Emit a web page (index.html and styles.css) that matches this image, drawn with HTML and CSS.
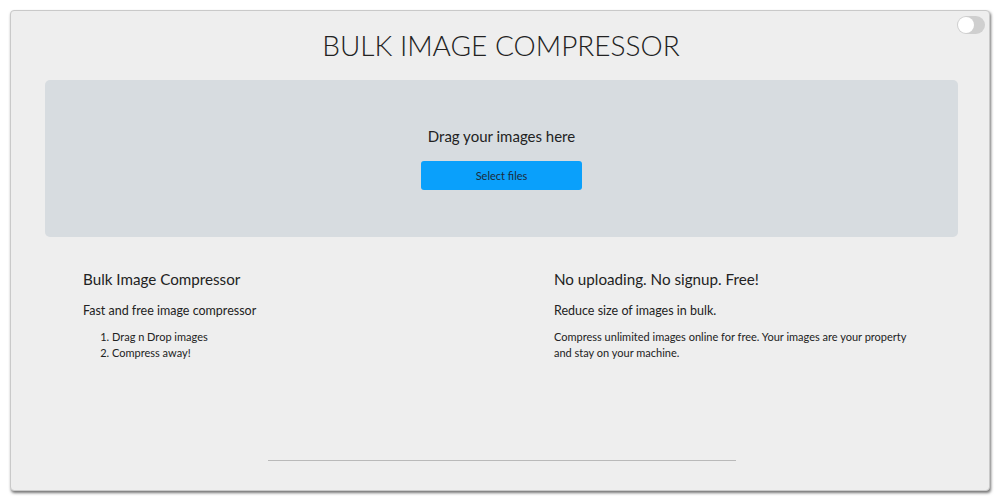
FILE: index.html
```html
<!DOCTYPE html>
<html>
<head>
<meta charset="utf-8">
<link rel="stylesheet" href="styles.css">
</head>
<body>
<div class="frame">
  <div class="toggle"><span class="knob"></span></div>
  <h1 class="title">BULK IMAGE COMPRESSOR</h1>
  <div class="dropzone">
    <p class="drop-text">Drag your images here</p>
    <button class="select-btn">Select files</button>
  </div>
  <div class="info">
    <div class="col col-left">
      <h2 class="col-title">Bulk Image Compressor</h2>
      <p class="col-sub">Fast and free image compressor</p>
      <ol class="steps">
        <li>Drag n Drop images</li>
        <li>Compress away!</li>
      </ol>
    </div>
    <div class="col col-right">
      <h2 class="col-title">No uploading. No signup. Free!</h2>
      <p class="col-sub">Reduce size of images in bulk.</p>
      <p class="col-text">Compress unlimited images online for free. Your images are your property and stay on your machine.</p>
    </div>
  </div>
  <div class="rule-wrap"><div class="rule"></div></div>
</div>
</body>
</html>
```
FILE: styles.css
```css
* { box-sizing: border-box; }
html, body { margin: 0; padding: 0; }
body {
  background: #ffffff;
  font-family: "Lato", "Liberation Sans", sans-serif;
  color: #222;
  width: 1000px;
  height: 500px;
  overflow: hidden;
}
.frame {
  position: relative;
  margin: 10px 10px 0 10px;
  height: 481px;
  background: #eeeeee;
  border: 1px solid #c9c9c9;
  border-radius: 4px;
  box-shadow: 1px 2px 3px rgba(0,0,0,0.55);
  padding-top: 15px;
}
.toggle {
  position: absolute;
  top: 5px;
  right: 4px;
  width: 28px;
  height: 18px;
  border-radius: 9px;
  background: #cfcfcf;
}
.knob {
  position: absolute;
  left: 1px;
  top: 1px;
  width: 16px;
  height: 16px;
  border-radius: 50%;
  background: #ffffff;
}
.title {
  margin: 0;
  text-align: center;
  font-weight: 300;
  font-size: 28px;
  line-height: 38px;
  color: #222;
  padding-left: 2px;
}
.dropzone {
  margin: 16px 31px 0 34px;
  height: 157px;
  background: #d7dce0;
  border-radius: 5px;
  display: flex;
  flex-direction: column;
  align-items: center;
  padding-top: 45px;
}
.drop-text {
  margin: 0;
  font-size: 15px;
  line-height: 22px;
  color: #222;
}
.select-btn {
  margin-top: 14px;
  width: 161px;
  height: 29px;
  border: none;
  border-radius: 3px;
  background: #0aa0fb;
  color: #1d2b3a;
  font-family: "Lato", "Liberation Sans", sans-serif;
  font-size: 11px;
}
.info {
  display: grid;
  grid-template-columns: 471px 1fr;
  padding: 32px 0 0 72px;
}
.col-title {
  margin: 0;
  font-weight: 400;
  font-size: 15.2px;
  line-height: 21px;
  color: #222;
}
.col-sub {
  margin: 12px 0 0 0;
  font-size: 12.5px;
  line-height: 18px;
  color: #222;
}
.steps {
  margin: 9px 0 0 0;
  padding-left: 29px;
  font-size: 11px;
  line-height: 16px;
  color: #222;
}
.col-text {
  margin: 9px 0 0 0;
  font-size: 11px;
  line-height: 16px;
  color: #222;
  max-width: 370px;
}
.rule-wrap {
  display: flex;
  justify-content: center;
  padding-top: 99px;
  padding-left: 3px;
}
.rule {
  width: 468px;
  height: 1px;
  background: #b9b9b9;
}
```
